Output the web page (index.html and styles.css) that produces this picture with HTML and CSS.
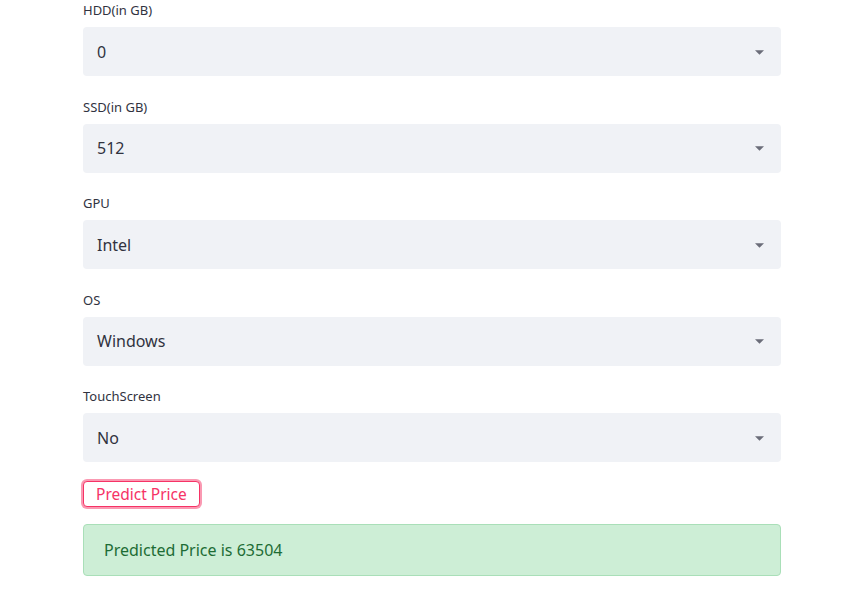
FILE: index.html
```html
<!DOCTYPE html>
<html>
<head>
<meta charset="utf-8">
<link rel="stylesheet" href="styles.css">
</head>
<body>
<main class="main">
  <div class="field">
    <label class="label">HDD(in GB)</label>
    <div class="select"><span>0</span><svg class="caret" viewBox="0 0 10 5" width="10" height="5"><path d="M0 0h10L5 5z"/></svg></div>
  </div>
  <div class="field">
    <label class="label">SSD(in GB)</label>
    <div class="select"><span>512</span><svg class="caret" viewBox="0 0 10 5" width="10" height="5"><path d="M0 0h10L5 5z"/></svg></div>
  </div>
  <div class="field">
    <label class="label">GPU</label>
    <div class="select"><span>Intel</span><svg class="caret" viewBox="0 0 10 5" width="10" height="5"><path d="M0 0h10L5 5z"/></svg></div>
  </div>
  <div class="field">
    <label class="label">OS</label>
    <div class="select"><span>Windows</span><svg class="caret" viewBox="0 0 10 5" width="10" height="5"><path d="M0 0h10L5 5z"/></svg></div>
  </div>
  <div class="field">
    <label class="label">TouchScreen</label>
    <div class="select"><span>No</span><svg class="caret" viewBox="0 0 10 5" width="10" height="5"><path d="M0 0h10L5 5z"/></svg></div>
  </div>
  <div class="actions">
    <button class="btn">Predict Price</button>
  </div>
  <div class="success">Predicted Price is 63504</div>
</main>
</body>
</html>
```
FILE: styles.css
```css
* { box-sizing: border-box; }
html, body { margin: 0; padding: 0; background: #fff; }
body {
  font-family: "Noto Sans", "Open Sans", sans-serif;
  color: #31333f;
}
.main {
  width: 698px;
  margin-left: 83px;
  display: flex;
  flex-direction: column;
  gap: 20.5px;
}
.field {
  display: flex;
  flex-direction: column;
  gap: 7px;
}
.label {
  height: 20px;
  line-height: 20px;
  font-size: 13px;
  color: #31333f;
}
.select {
  height: 49px;
  background: #f0f2f6;
  border-radius: 4px;
  display: flex;
  align-items: center;
  justify-content: space-between;
  padding: 0 17px 0 14px;
  font-size: 16px;
}
.caret { fill: #6b6d79; width: 9px; height: 5px; margin-top: 1px; }
.actions { margin-top: -2px; display: flex; }
.btn {
  font-family: inherit;
  font-size: 15.5px;
  color: #f63366;
  background: #fff;
  border: 1px solid #f63366;
  border-radius: 4px;
  height: 26px;
  padding: 0 12px;
  box-shadow: 0 0 0 2px rgba(246, 51, 102, 0.5);
  line-height: 22px;
}
.success {
  margin-top: -3px;
  height: 52px;
  background: #cdeed6;
  border: 1px solid #a9dfb8;
  border-radius: 4px;
  color: #1d6c35;
  font-size: 16px;
  display: flex;
  align-items: center;
  padding-left: 20px;
}
```
